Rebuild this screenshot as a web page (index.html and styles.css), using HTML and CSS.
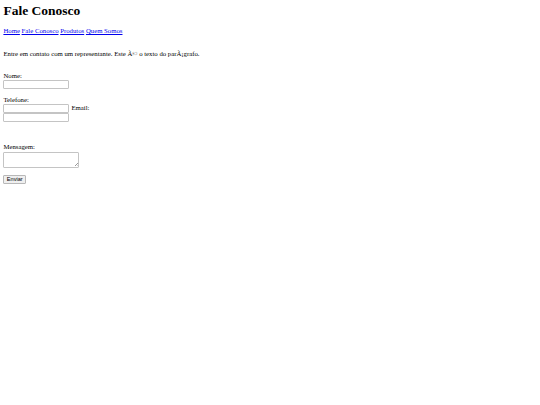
FILE: index.html
```html
<!DOCTYPE html>
<html lang="pt">
<head>
<meta charset="utf-8">
<title>Fale Conosco</title>
<link rel="stylesheet" href="styles.css">
</head>
<body>
<h1 class="title">Fale Conosco</h1>
<nav class="menu">
<a href="#">Home</a> <a href="#">Fale Conosco</a> <a href="#">Produtos</a> <a href="#">Quem Somos</a>
</nav>
<p class="intro">Entre em contato com um representante. Este Ã© o texto do parÃ¡grafo.</p>
<form class="form">
<div class="group">
<label class="label" for="nome">Nome:</label>
<input class="field" id="nome" type="text">
</div>
<div class="group">
<label class="label" for="tel">Telefone:</label>
<div class="pair">
<input class="field" id="tel" type="text">
<label class="label" for="email">Email:</label>
</div>
<input class="field" id="email" type="text">
</div>
<div class="group group-msg">
<label class="label" for="msg">Mensagem:</label>
<span class="area-wrap"><textarea class="area" id="msg"></textarea></span>
</div>
<div class="actions">
<button class="btn" type="button">Enviar</button>
</div>
</form>
</body>
</html>
```
FILE: styles.css
```css
html, body {
  background: #fff;
}
body {
  margin: 3px 3.4px;
  font-family: "Liberation Serif", "Times New Roman", serif;
  font-size: 6.75px;
  line-height: 8px;
  color: #000;
}
.title {
  font-size: 13.5px;
  line-height: 16px;
  font-weight: bold;
  margin: 0;
}
.menu {
  margin: 7.7px 0 0 0;
}
.menu a {
  color: #0000ee;
}
.intro {
  margin: 15.2px 0 0 0;
}
.form {
  margin: 14.3px 0 0 0;
}
.group {
  display: flex;
  flex-direction: column;
  align-items: flex-start;
  margin-bottom: 6.75px;
}
.group-msg {
  margin-top: 21.6px;
}
.label {
  display: block;
}
.pair {
  display: flex;
  align-items: baseline;
  gap: 2px;
}
.field {
  box-sizing: border-box;
  display: block;
  width: 66px;
  height: 8.9px;
  border: 1px solid #c4c4c4;
  border-radius: 1px;
  padding: 0 1px;
  margin: 0;
  font-family: "Liberation Sans", Arial, sans-serif;
  font-size: 5.6px;
  background: #fff;
}
.area-wrap {
  position: relative;
  display: block;
  margin-top: 1.2px;
}
.area-wrap::after {
  content: "";
  position: absolute;
  right: 1.5px;
  bottom: 1.5px;
  width: 3px;
  height: 3px;
  background: linear-gradient(135deg, transparent 45%, #9a9a9a 50%, transparent 60%, transparent 70%, #9a9a9a 78%, transparent 88%);
  pointer-events: none;
}
.area {
  box-sizing: border-box;
  display: block;
  width: 76px;
  height: 15.5px;
  border: 1px solid #c4c4c4;
  border-radius: 1px;
  padding: 1px;
  margin: 0;
  resize: none;
  font-family: "Liberation Mono", monospace;
  font-size: 5.6px;
  background: #fff;
}
.actions {
  margin-top: 7px;
}
.btn {
  box-sizing: border-box;
  display: block;
  width: 22.8px;
  height: 8.8px;
  padding: 0;
  border: 1px solid #b8b8b8;
  border-radius: 1px;
  background: #efefef;
  color: #000;
  font-family: "Liberation Sans", Arial, sans-serif;
  font-size: 5.6px;
  line-height: 6.5px;
  margin: 0;
}
```
